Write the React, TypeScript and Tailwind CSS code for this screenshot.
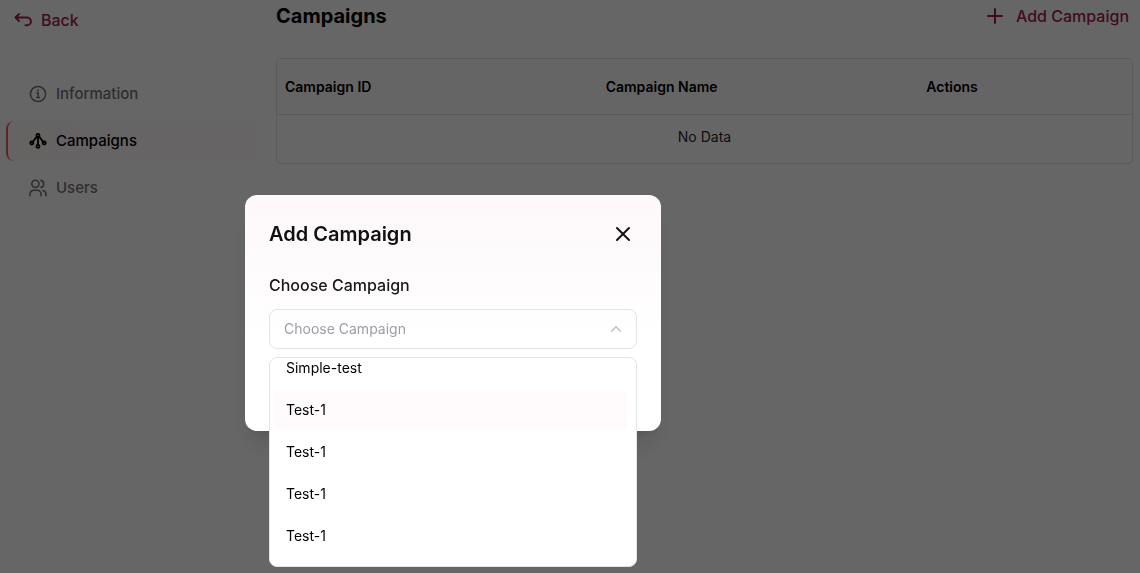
import { useState } from "react";
import { ChevronUp, Plus, X } from "lucide-react";

const columns = ["Campaign ID", "Campaign Name", "Actions"];

const campaigns = [
  { id: 1, name: "Simple-test" },
  { id: 2, name: "Test-1" },
  { id: 3, name: "Test-1" },
  { id: 4, name: "Test-1" },
  { id: 5, name: "Test-1" },
];

function BackIcon() {
  return (
    <svg width="18" height="16" viewBox="0 0 18 16" fill="none" stroke="currentColor" strokeWidth="2" strokeLinecap="round" strokeLinejoin="round" aria-hidden="true">
      <path d="M5 2 1.5 5.5 5 9M1.5 5.5H13a3.7 3.7 0 0 1 0 7.8H11.5" />
    </svg>
  );
}

function InfoIcon() {
  return (
    <svg width="18" height="18" viewBox="0 0 18 18" fill="none" stroke="currentColor" strokeWidth="1.5" aria-hidden="true">
      <circle cx="9" cy="9" r="7.6" />
      <path d="M7.4 8h1.8v4.4M7.2 12.4h3.8" />
      <circle cx="9" cy="5.6" r="1" fill="currentColor" stroke="none" />
    </svg>
  );
}

function CampaignIcon() {
  return (
    <svg width="18" height="18" viewBox="0 0 18 18" fill="none" stroke="currentColor" strokeWidth="1.8" aria-hidden="true">
      <circle cx="9" cy="3.4" r="1.5" />
      <circle cx="2.8" cy="11" r="1.5" />
      <circle cx="15.2" cy="11" r="1.5" />
      <circle cx="9" cy="14.4" r="1.5" />
      <path d="M9 5v7.8M7.8 4.6 3.9 9.7M10.2 4.6l3.9 5.1" />
    </svg>
  );
}

function UsersIcon() {
  return (
    <svg width="18" height="18" viewBox="0 0 18 18" fill="none" stroke="currentColor" strokeWidth="1.6" strokeLinecap="round" aria-hidden="true">
      <circle cx="6.4" cy="4.8" r="3.6" />
      <path d="M1 16.8v-1.6a4 4 0 0 1 4-4h3a4 4 0 0 1 4 4v1.6M12 1.4a3.6 3.6 0 0 1 0 7M14 11.5a4 4 0 0 1 3 3.8v1.5" />
    </svg>
  );
}

function Sidebar() {
  return (
    <aside className="w-[262px] shrink-0 pr-[5px] pl-[6px]">
      <a href="#back" className="flex h-10 items-center gap-[9px] pl-2 text-base font-medium text-[#a3224b]">
        <BackIcon />
        Back
      </a>
      <nav className="mt-[34px] flex flex-col gap-[7px] text-[15px] font-medium text-[#77727c]">
        <a href="#information" className="flex h-10 items-center gap-[9px] border-l-2 border-transparent pl-[21px]">
          <InfoIcon />
          Information
        </a>
        <a href="#campaigns" aria-current="page" className="flex h-10 items-center gap-[9px] rounded-lg border-l-2 border-[#f5566a] bg-linear-to-r from-[#fff7f8] to-[#fffcfd] pl-[21px] text-black">
          <CampaignIcon />
          Campaigns
        </a>
        <a href="#users" className="flex h-10 items-center gap-[9px] border-l-2 border-transparent pl-[21px]">
          <UsersIcon />
          Users
        </a>
      </nav>
    </aside>
  );
}

function CampaignTable() {
  return (
    <div className="mt-[26px] overflow-hidden rounded border border-[#e4e4e7]">
      <table className="w-full table-fixed text-left text-sm">
        <colgroup>
          <col className="w-[37.5%]" />
          <col className="w-[37.5%]" />
          <col className="w-[25%]" />
        </colgroup>
        <thead className="bg-[#fcfcfc]">
          <tr className="h-[55px] border-b border-[#e4e4e7]">
            {columns.map((column) => (
              <th key={column} className="px-2 pt-[2px] font-semibold">{column}</th>
            ))}
          </tr>
        </thead>
        <tbody>
          <tr className="h-[49px]">
            <td colSpan={3} className="pb-1 text-center text-[#27272a]">No Data</td>
          </tr>
        </tbody>
      </table>
    </div>
  );
}

function AddCampaignDialog({ onClose }: { onClose: () => void }) {
  const [active, setActive] = useState(2);

  return (
    <div className="fixed inset-0 bg-black/60 pt-[195px] pl-[245px]">
      <div role="dialog" aria-modal="true" aria-labelledby="dialog-title" className="min-h-[236px] w-[416px] rounded-xl bg-linear-to-b from-[#fdf7f9] to-white to-60% p-6 shadow-xl">
        <div className="flex h-[30px] items-center justify-between">
          <h2 id="dialog-title" className="text-xl font-semibold text-[#111113]">Add Campaign</h2>
          <button type="button" aria-label="Close" onClick={onClose} className="mr-[2px] text-[#111113]">
            <X size={24} strokeWidth={2} />
          </button>
        </div>
        <label htmlFor="campaign" className="mt-6 block text-base font-medium text-[#18181b]">Choose Campaign</label>
        <div className="relative mt-3">
          <select id="campaign" defaultValue="" className="h-10 w-full appearance-none rounded-lg border border-[#e4e4e7] bg-transparent px-[14px] text-sm text-[#a09ba6]">
            <option value="">Choose Campaign</option>
          </select>
          <ChevronUp size={18} strokeWidth={1.5} className="pointer-events-none absolute top-[11px] right-3 text-[#b8b8be]" />
          <ul role="listbox" aria-label="Campaigns" className="absolute top-12 flex h-[210px] w-full flex-col justify-end gap-1 overflow-hidden rounded-lg border border-[#e4e4e7] bg-white pr-[9px] pb-[11px] pl-1">
            {campaigns.map((campaign) => (
              <li
                key={campaign.id}
                role="option"
                aria-selected={campaign.id === active}
                onMouseEnter={() => setActive(campaign.id)}
                className={`flex h-[38px] shrink-0 items-center rounded px-3 text-sm text-black ${campaign.id === active ? "bg-[#fffafb]" : ""}`}
              >
                {campaign.name}
              </li>
            ))}
          </ul>
        </div>
      </div>
    </div>
  );
}

export default function App() {
  const [open, setOpen] = useState(true);

  return (
    <div className="flex min-h-screen bg-white font-['Inter',sans-serif] text-black">
      <Sidebar />
      <main className="min-w-0 flex-1 pr-[7px] pl-[14px]">
        <div className="flex h-8 items-center justify-between">
          <h1 className="text-xl font-bold">Campaigns</h1>
          <button type="button" onClick={() => setOpen(true)} className="flex items-center gap-[9px] pr-1 text-base font-medium text-[#a3224b]">
            <Plus size={24} strokeWidth={2} />
            Add Campaign
          </button>
        </div>
        <CampaignTable />
      </main>
      {open && <AddCampaignDialog onClose={() => setOpen(false)} />}
    </div>
  );
}
